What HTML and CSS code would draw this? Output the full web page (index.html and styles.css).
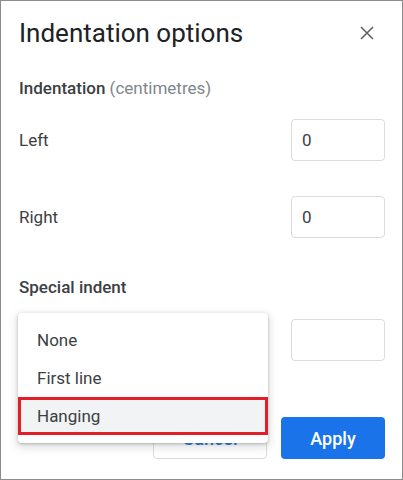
FILE: index.html
```html
<!DOCTYPE html>
<html lang="en">
<head>
    <meta charset="UTF-8">
    <meta name="viewport" content="width=device-width, initial-scale=1.0">
    <title>Indentation options</title>
    <link rel="stylesheet" href="styles.css">
</head>
<body>
<div class="dialog">
    <header class="dialog-header">
        <h1 class="dialog-title">Indentation options</h1>
        <button class="close-button" aria-label="Close">
            <svg width="24" height="24" viewBox="0 0 24 24">
                <path d="M6 6 L18 18 M18 6 L6 18" stroke="#5f6368" stroke-width="1.6" fill="none"/>
            </svg>
        </button>
    </header>

    <section class="group">
        <h2 class="group-title">Indentation <span class="unit">(centimetres)</span></h2>
        <div class="field-row first">
            <label class="field-label">Left</label>
            <div class="text-box">0</div>
        </div>
        <div class="field-row">
            <label class="field-label">Right</label>
            <div class="text-box">0</div>
        </div>
    </section>

    <section class="group special">
        <h2 class="group-title">Special indent</h2>
        <div class="field-row special-row">
            <div class="select-box"></div>
            <div class="text-box"></div>
        </div>
    </section>

    <footer class="dialog-footer">
        <button class="btn btn-cancel">Cancel</button>
        <button class="btn btn-apply">Apply</button>
    </footer>

    <ul class="menu">
        <li class="menu-item">None</li>
        <li class="menu-item">First line</li>
        <li class="menu-item selected">Hanging</li>
    </ul>
</div>
</body>
</html>
```

FILE: styles.css
```css
:root {
    --text-color: #3c4043;
    --title-color: #202124;
    --muted-color: #80868b;
    --border-color: #dadce0;
    --blue: #1a73e8;
    --font-family: Roboto, "Noto Sans", Arial, sans-serif;
}
html, body {
    margin: 0;
    padding: 0;
    background: #fff;
}
body {
    font-family: var(--font-family);
    color: var(--text-color);
}
.dialog {
    position: relative;
    width: 403px;
    height: 480px;
    box-sizing: border-box;
    border: 1px solid #8c8c8c;
    padding: 0 17px 0 18px;
}
.dialog-header {
    height: 64px;
    display: flex;
    align-items: center;
    justify-content: space-between;
}
.dialog-title {
    margin: 0;
    font-size: 26px;
    font-weight: 400;
    color: var(--title-color);
    line-height: 32px;
}
.close-button {
    width: 24px;
    height: 24px;
    padding: 0;
    margin-right: 6px;
    border: none;
    background: none;
}
.close-button svg {
    display: block;
}
.group-title {
    margin: 13px 0 0;
    font-size: 17px;
    font-weight: 500;
    line-height: 20px;
    color: var(--text-color);
}
.unit {
    font-weight: 400;
    color: var(--muted-color);
}
.field-row {
    height: 42px;
    display: flex;
    align-items: center;
    justify-content: space-between;
    margin-top: 35px;
}
.field-row.first {
    margin-top: 21px;
}
.field-label {
    font-size: 17px;
    color: var(--text-color);
}
.text-box {
    width: 94px;
    height: 42px;
    box-sizing: border-box;
    border: 1px solid var(--border-color);
    border-radius: 4px;
    padding: 0 10px;
    font-size: 17px;
    line-height: 40px;
    color: var(--text-color);
}
.special .group-title {
    margin-top: 39px;
}
.special-row {
    margin-top: 22px;
}
.dialog-footer {
    margin-top: 56px;
    display: flex;
    justify-content: flex-end;
    gap: 14px;
}
.btn {
    height: 42px;
    border-radius: 4px;
    font-family: var(--font-family);
    font-size: 18px;
    font-weight: 500;
    cursor: pointer;
}
.btn-cancel {
    width: 114px;
    background: #fff;
    border: 1px solid var(--border-color);
    color: var(--blue);
}
.btn-apply {
    width: 104px;
    background: var(--blue);
    border: none;
    color: #fff;
}
.menu {
    position: absolute;
    left: 17px;
    top: 312px;
    width: 250px;
    margin: 0;
    padding: 8px 0;
    list-style: none;
    background: #fff;
    border-radius: 4px;
    box-shadow: 0 1px 3px rgba(60, 64, 67, 0.3), 0 3px 8px 2px rgba(60, 64, 67, 0.15);
}
.menu-item {
    height: 38px;
    line-height: 38px;
    padding-left: 19px;
    font-size: 17px;
    color: var(--text-color);
}
.menu-item.selected {
    background: #f1f3f4;
    outline: 3px solid #e41e26;
    outline-offset: -3px;
}
```
